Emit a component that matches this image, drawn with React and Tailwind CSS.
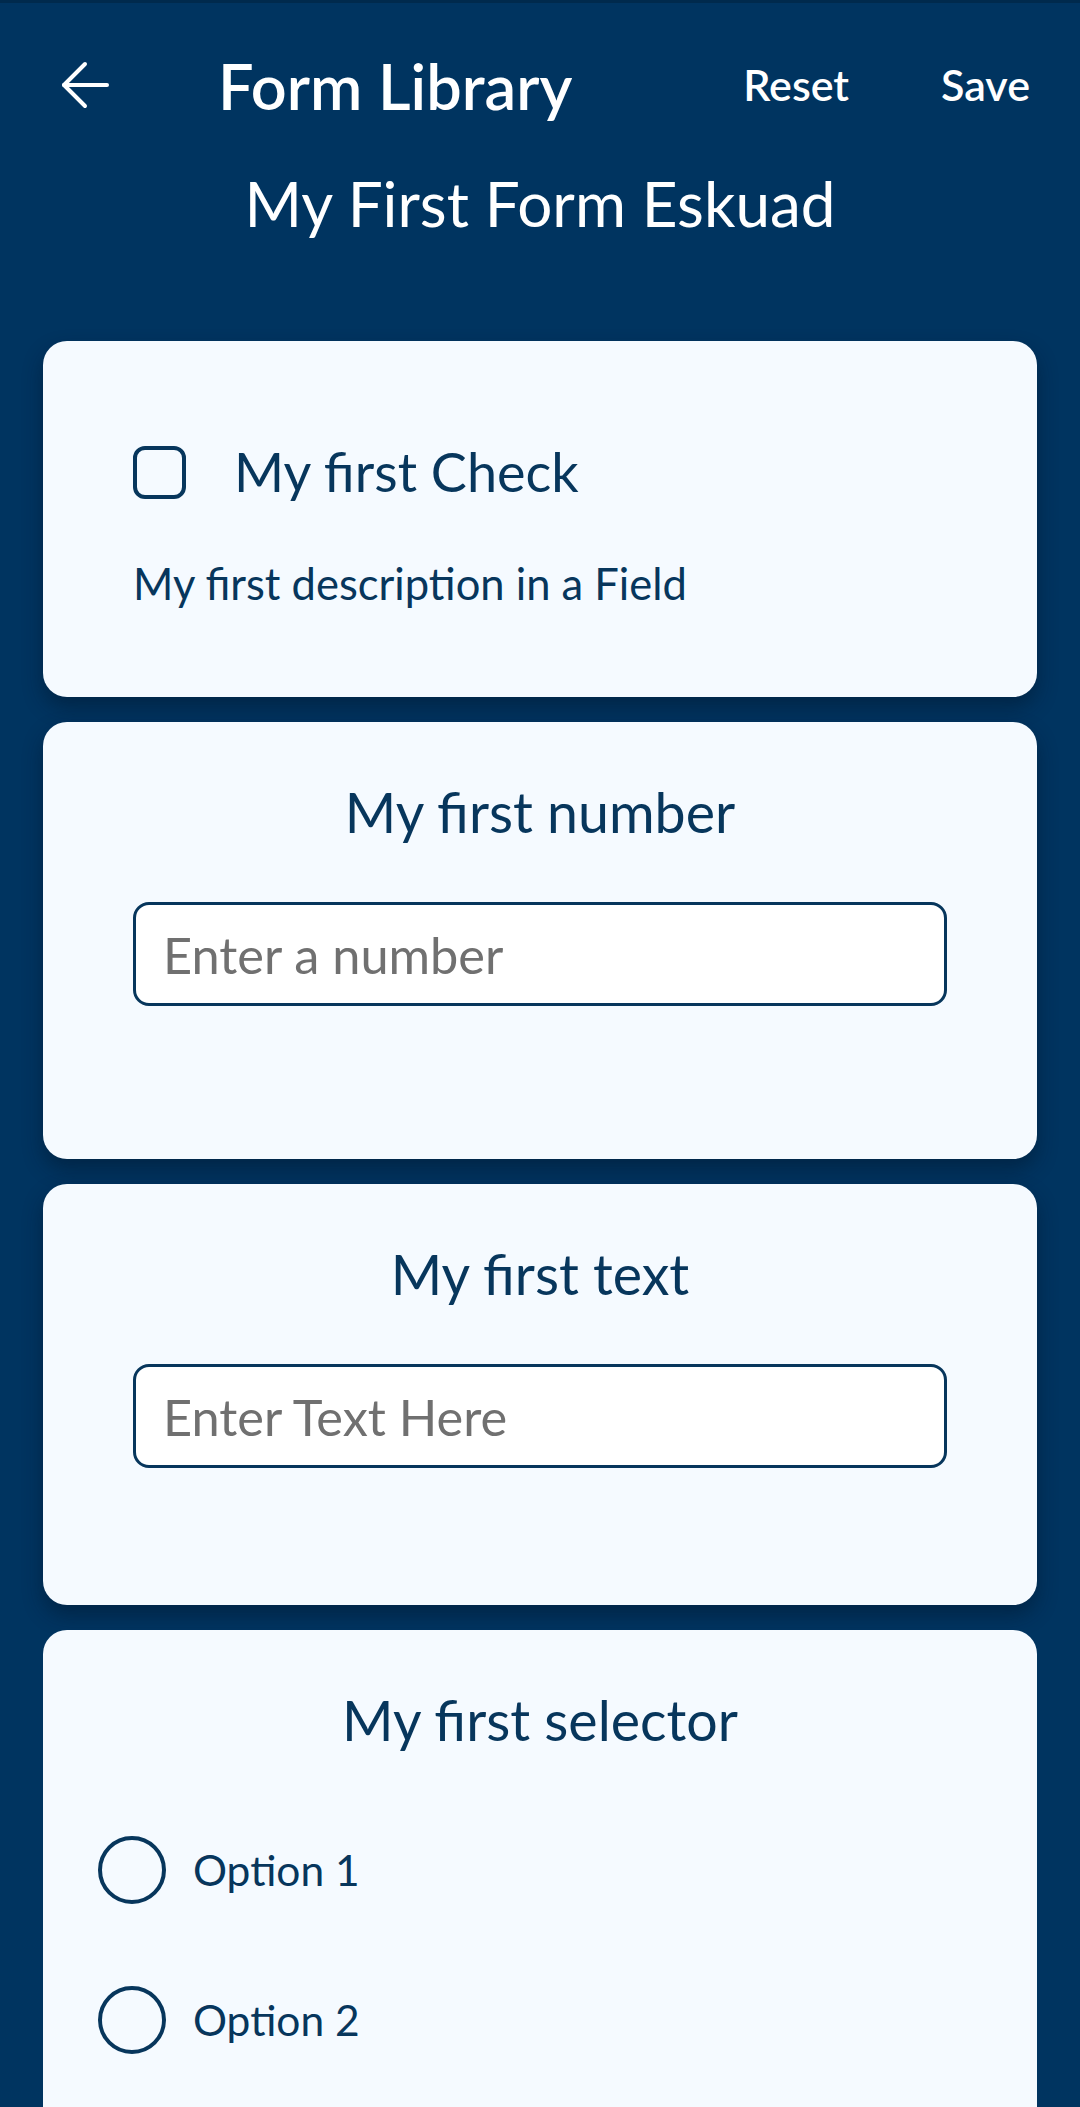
import React from "react";

const font = { fontFamily: "Lato, 'Noto Sans', sans-serif" };

function Radio({ label }) {
    return (
        <div className="flex items-center h-[70px]">
            <span className="w-[68px] h-[68px] rounded-full border-[4px] border-[#07365c] shrink-0"></span>
            <span className="ml-[27px] text-[42.5px] text-[#07365c] leading-none">{label}</span>
        </div>
    );
}

function InputCard({ title, placeholder, height }) {
    return (
        <div className={`bg-[#f5faff] rounded-[24px] shadow-[0_10px_20px_rgba(0,20,40,0.45)] px-[90px] pt-[58px] ${height}`}>
            <h2 className="text-[55.5px] leading-[64px] text-center text-[#07365c]">{title}</h2>
            <input
                type="text"
                placeholder={placeholder}
                className="mt-[58px] w-full h-[104px] bg-white border-[3px] border-[#07365c] rounded-[16px] px-[27px] text-[50.5px] text-[#333] placeholder:text-[#707070] outline-none"
                style={font}
            />
        </div>
    );
}

export default function App() {
    return (
        <div className="h-[2107px] bg-[#003460] border-t-[3px] border-[#002a4d] overflow-hidden" style={font}>
            <header className="text-white">
                <div className="flex items-center h-[164px] pl-[60px] pr-[50px]">
                    <svg width="50" height="48" viewBox="0 0 50 48" fill="none" stroke="white" strokeWidth="4" strokeLinecap="round" strokeLinejoin="round">
                        <path d="M47 24H4" />
                        <path d="M25 3L4 24l21 21" />
                    </svg>
                    <h1 className="ml-[108px] text-[63px] font-semibold leading-none">Form Library</h1>
                    <div className="ml-auto flex gap-[92px] text-[43px] font-semibold">
                        <button>Reset</button>
                        <button>Save</button>
                    </div>
                </div>
            </header>
            <div className="text-center text-white text-[62px] leading-none mt-[5px]">My First Form Eskuad</div>

            <main className="px-[43px] pt-[107px] flex flex-col gap-[25px]">
                <div className="bg-[#f5faff] rounded-[24px] shadow-[0_10px_20px_rgba(0,20,40,0.45)] h-[356px] pl-[90px] pt-[104px]">
                    <label className="flex items-center">
                        <span className="w-[53px] h-[53px] rounded-[12px] border-[4px] border-[#07365c] shrink-0"></span>
                        <span className="ml-[48px] text-[54px] text-[#07365c] leading-none">My first Check</span>
                    </label>
                    <p className="mt-[63px] text-[43.5px] text-[#07365c] leading-none">My first description in a Field</p>
                </div>

                <InputCard title="My first number" placeholder="Enter a number" height="h-[437px]" />
                <InputCard title="My first text" placeholder="Enter Text Here" height="h-[421px]" />

                <div className="bg-[#f5faff] rounded-[24px] h-[600px] pt-[58px] pl-[55px]">
                    <h2 className="text-[55.5px] leading-[64px] text-center text-[#07365c] -ml-[55px]">My first selector</h2>
                    <div className="mt-[83px] flex flex-col gap-[80px]">
                        <Radio label="Option 1" />
                        <Radio label="Option 2" />
                    </div>
                </div>
            </main>
        </div>
    );
}
